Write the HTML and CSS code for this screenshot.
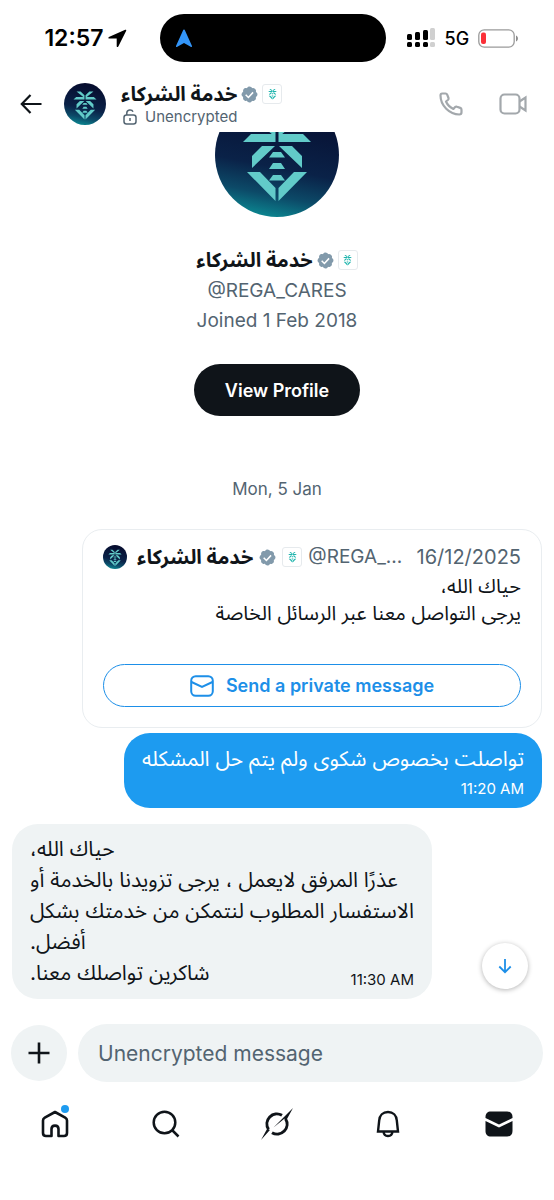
FILE: index.html
```html
<!DOCTYPE html>
<html lang="en">

<head>
    <meta charset="UTF-8">
    <meta name="viewport" content="width=device-width, initial-scale=1.0">
    <title>Messages</title>
    <link rel="stylesheet" href="styles.css">
</head>

<body>
    <!-- Shared symbols -->
    <svg class="symbols" aria-hidden="true">
        <defs>
            <linearGradient id="night" x1="0.6" y1="0" x2="0.4" y2="1">
                <stop offset="0" stop-color="#060b2c" />
                <stop offset="0.6" stop-color="#0a2248" />
                <stop offset="0.82" stop-color="#0c4a68" />
                <stop offset="1" stop-color="#0b8791" />
            </linearGradient>
        </defs>
        <symbol id="palm" viewBox="26 20 72 90">
            <path d="M37 25h12l11.500 11v8zM87 25H75L63.500 36v8zM36 41h24.500v8H28zM88 41H63.500v8H96zM47 53h13L37 75V63zM77 53H64l23 22V63z" />
            <path d="M58 59h8l4 5.500H54zM58 70h8l4 6H54zM58 82h8l4 5.500H54z" />
            <path d="M32 79h13l15.500 16v13zM92 79H79L63.500 95v13z" />
        </symbol>
        <symbol id="avatar" viewBox="0 0 124 124">
            <circle cx="62" cy="62" r="62" fill="url(#night)" />
            <use href="#palm" x="26" y="20" width="72" height="90" fill="#62cbc9" />
        </symbol>
        <symbol id="verified" viewBox="1 1 20 20">
            <path fill="#829aab" d="M20.4 11c0-.6-.2-1.3-.5-1.8s-.8-1-1.4-1.200c.2-.6.3-1.300.1-1.900-.1-.7-.4-1.200-.9-1.700s-1-.8-1.700-.9c-.6-.1-1.300-.1-1.900.1-.2-.6-.7-1.100-1.200-1.400S11.600 1.600 11 1.600s-1.300.2-1.800.5-1 .8-1.200 1.400c-.6-.2-1.300-.2-1.900-.1-.7.1-1.200.4-1.700.9s-.8 1-.9 1.700c-.1.6-.1 1.300.1 1.900-.6.2-1.100.7-1.400 1.200S1.600 10.400 1.600 11s.2 1.300.6 1.800c.3.5.8 1 1.400 1.200-.2.6-.3 1.300-.1 1.900.1.700.4 1.200.9 1.700s1 .8 1.700.9c.6.1 1.300.1 1.900-.1.2.6.7 1.100 1.200 1.400s1.200.6 1.800.6 1.300-.2 1.800-.6c.5-.3 1-.8 1.200-1.400.6.2 1.300.3 1.900.1.700-.1 1.200-.4 1.700-.9s.8-1 .9-1.700c.1-.6.1-1.300-.1-1.900.6-.2 1.100-.7 1.400-1.200.4-.5.500-1.200.500-1.800z" />
            <path fill="none" stroke="#fff" stroke-width="1.800" d="M6.500 11.300l3.200 3.200 5.500-6" />
        </symbol>
    </svg>

    <div class="screen">
        <div class="status-bar">
            <div class="status-time">
                <span>12:57</span>
                <svg width="19" height="19" viewBox="0 0 19 19">
                    <path d="M17.200.8.900 7.900c-.8.400-.6 1.600.3 1.600h7.500v7.700c0 1 1.200 1.200 1.600.3L18.200 1.800c.3-.7-.3-1.300-1-1z" />
                </svg>
            </div>
            <div class="island">
                <svg width="18" height="19" viewBox="0 0 18 19">
                    <path fill="#3395f8" d="M9 .6c.5 0 .8.300 1 .8l6.900 15.300c.4.900-.4 1.600-1.200 1.100L9 14l-6.700 3.800c-.8.500-1.600-.2-1.200-1.100L8 1.400c.2-.5.500-.8 1-.8z" />
                </svg>
            </div>
            <div class="status-icons">
                <svg width="29" height="20" viewBox="0 0 29 20">
                    <rect x="0" y="6" width="5" height="6" rx="1.500" />
                    <rect x="8" y="4" width="5" height="8" rx="1.500" />
                    <rect x="16" y="2" width="5" height="10" rx="1.500" />
                    <rect x="23" y="0" width="5" height="12" rx="1.500" fill="#d0d0d0" />
                    <rect x="0" y="14" width="5" height="5" rx="1.500" />
                    <rect x="8" y="14" width="5" height="5" rx="1.500" />
                    <rect x="16" y="14" width="5" height="5" rx="1.500" />
                    <rect x="23" y="14" width="5" height="5" rx="1.500" fill="#d0d0d0" />
                </svg>
                <span>5G</span>
                <svg width="41" height="19" viewBox="0 0 41 19">
                    <rect x=".8" y=".8" width="35.400" height="17.400" rx="5.500" fill="none" stroke="#9a9a9a" stroke-width="1.300" />
                    <rect x="3" y="3.500" width="5" height="11.500" rx="2" fill="#fb3038" />
                    <path fill="#8c8c8c" d="M38 6.500c2.600 1 2.600 5 0 6z" />
                </svg>
            </div>
        </div>

        <header class="chat-header">
            <button class="icon-button" aria-label="Back">
                <svg width="22" height="20" viewBox="0 0 22 20" fill="none" stroke="#0f1419" stroke-width="2.200">
                    <path d="M10.500 1 1.800 10l8.700 9M2 10h19.500" />
                </svg>
            </button>
            <svg class="header-avatar"><use href="#avatar" /></svg>
            <div class="header-title">
                <div class="name-row">
                    <span class="name" lang="ar" dir="rtl">خدمة الشركاء</span>
                    <svg class="verified"><use href="#verified" /></svg>
                    <span class="affiliate"><svg><use href="#palm" /></svg></span>
                </div>
                <div class="encryption">
                    <svg width="14" height="16" viewBox="0 0 14 16" fill="none" stroke="#536471" stroke-width="1.500">
                        <rect x="1" y="6" width="12" height="9" rx="2.500" />
                        <path d="M3.800 6V4c0-3.500 5-4.200 6.200-1.200M7 9v3" />
                    </svg>
                    <span>Unencrypted</span>
                </div>
            </div>
            <div class="header-actions">
                <button class="icon-button" aria-label="Call">
                    <svg width="24" height="24" viewBox="0 0 24 24" fill="none" stroke="#a3a8ac" stroke-width="2.200" stroke-linejoin="round">
                        <path d="M3.200 1.500h3.300c.9 0 1.500.5 1.800 1.300l1.200 3.200c.3.800 0 1.500-.6 2L7 9.500c1.300 3 4.200 6 7.400 7.400l1.700-1.800c.5-.5 1.200-.7 1.900-.4l3.200 1.200c.8.300 1.300.9 1.300 1.800v2.600c0 1.400-.9 2.200-2.200 2.200C10.500 22.500 1.500 13.500 1.500 3.500c0-1.200.7-2 1.700-2z" />
                    </svg>
                </button>
                <button class="icon-button" aria-label="Video call">
                    <svg width="28" height="22" viewBox="0 0 28 22" fill="none" stroke="#a3a8ac" stroke-width="2.200">
                        <rect x="1.500" y="1.500" width="19" height="19" rx="4" />
                        <path d="M20.500 8.500 26.500 4.500v13l-6-4" />
                    </svg>
                </button>
            </div>
        </header>

        <main class="conversation">
            <section class="profile">
                <svg class="profile-avatar"><use href="#avatar" /></svg>
                <div class="name-row">
                    <span class="name" lang="ar" dir="rtl">خدمة الشركاء</span>
                    <svg class="verified"><use href="#verified" /></svg>
                    <span class="affiliate"><svg><use href="#palm" /></svg></span>
                </div>
                <p>@REGA_CARES</p>
                <p>Joined 1 Feb 2018</p>
                <button class="view-profile">View Profile</button>
            </section>

            <p class="date">Mon, 5 Jan</p>

            <article class="quote-card">
                <div class="quote-head">
                    <svg class="quote-avatar"><use href="#avatar" /></svg>
                    <span class="name" lang="ar" dir="rtl">خدمة الشركاء</span>
                    <svg class="verified"><use href="#verified" /></svg>
                    <span class="affiliate"><svg><use href="#palm" /></svg></span>
                    <span class="handle">@REGA_...</span>
                    <time>16/12/2025</time>
                </div>
                <p class="quote-text" lang="ar" dir="rtl">حياك الله،<br>يرجى التواصل معنا عبر الرسائل الخاصة</p>
                <button class="private-message">
                    <svg width="24" height="22" viewBox="0 0 24 22" fill="none" stroke="#1d8fe8" stroke-width="2">
                        <rect x="1.200" y="1.200" width="21.600" height="19.600" rx="4.500" />
                        <path d="M1.500 7 12 12l10.500-5" />
                    </svg>
                    <span>Send a private message</span>
                </button>
            </article>

            <div class="bubble sent">
                <p lang="ar" dir="rtl">تواصلت بخصوص شكوى ولم يتم حل المشكله</p>
                <time>11:20 AM</time>
            </div>

            <div class="bubble received">
                <p lang="ar" dir="rtl">حياك الله،<br>عذرًا المرفق لايعمل ، يرجى تزويدنا بالخدمة أو<br>الاستفسار المطلوب لنتمكن من خدمتك بشكل<br>أفضل.<br>شاكرين تواصلك معنا.</p>
                <time>11:30 AM</time>
            </div>

            <button class="scroll-down" aria-label="Scroll to latest">
                <svg width="14" height="16" viewBox="0 0 14 16" fill="none" stroke="#1d8fe8" stroke-width="1.800">
                    <path d="M7 1v13M1.300 8.500 7 14.200l5.700-5.700" />
                </svg>
            </button>
        </main>

        <form class="composer">
            <button type="button" class="attach" aria-label="Add attachment">
                <svg width="22" height="22" viewBox="0 0 22 22" stroke="#0f1419" stroke-width="2.600">
                    <path d="M11 .5v21M.5 11h21" />
                </svg>
            </button>
            <input type="text" placeholder="Unencrypted message" aria-label="Message">
        </form>

        <nav class="tab-bar">
            <a href="#" class="home" aria-label="Home">
                <svg width="28" height="28" viewBox="0 0 28 28" fill="none" stroke="#0f1419" stroke-width="2.600" stroke-linejoin="round">
                    <path d="M14 2 3.800 7.600C2.600 8.300 2 9.300 2 10.600V23c0 2 1 3 3 3h5.500v-7c0-4.500 7-4.500 7 0v7H23c2 0 3-1 3-3V10.600c0-1.300-.6-2.300-1.800-3z" />
                </svg>
                <span class="dot"></span>
            </a>
            <a href="#" aria-label="Search">
                <svg width="28" height="28" viewBox="0 0 28 28" fill="none" stroke="#0f1419" stroke-width="2.500">
                    <circle cx="12.500" cy="12.500" r="10.800" />
                    <path d="M20 20l6.500 6.500" />
                </svg>
            </a>
            <a href="#" aria-label="Grok">
                <svg width="34" height="34" viewBox="0 0 34 34" fill="#0f1419">
                    <path fill="none" stroke="#0f1419" stroke-width="3" d="M22 8.300A10 10 0 0 0 8.500 22.300M12 25.700A10 10 0 0 0 25.500 11.700" />
                    <path d="M13.500 20.500 33 1 26.700 12.600l-2.400-.8zM1 33 7.300 21.400l2.600 1.600z" />
                </svg>
            </a>
            <a href="#" aria-label="Notifications">
                <svg width="26" height="28" viewBox="0 0 26 28" fill="none" stroke="#0f1419" stroke-width="2.400">
                    <path d="M13 2c-5 0-8.500 3.500-8.800 8.500L3 21.500h20l-1.200-11C21.500 5.500 18 2 13 2zM8.500 21.500c.5 6 8.500 6 9 0" />
                </svg>
            </a>
            <a href="#" aria-label="Messages">
                <svg width="28" height="26" viewBox="0 0 28 26" fill="#0f1419">
                    <path d="M.5 7V6c0-3.500 2-5.500 5.500-5.500h16c3.500 0 5.500 2 5.500 5.500v1L14 13.500z" />
                    <path d="M.5 10v10c0 3.500 2 5.500 5.500 5.500h16c3.500 0 5.500-2 5.500-5.500V10L14 16.500z" />
                </svg>
            </a>
        </nav>
    </div>
</body>

</html>
```
FILE: styles.css
```css
* {
    box-sizing: border-box;
}

body {
    margin: 0;
    background-color: #fff;
    color: #0f1419;
    font-family: Inter, "Noto Sans Arabic", "Noto Sans", "DejaVu Sans", sans-serif;
    font-size: 20px;
}

p {
    margin: 0;
}

svg {
    display: block;
    flex-shrink: 0;
}

button {
    border: 0;
    padding: 0;
    background: none;
    font-family: inherit;
    cursor: pointer;
}

.symbols {
    position: absolute;
    width: 0;
    height: 0;
}

.screen {
    display: flex;
    flex-direction: column;
    min-height: 100vh;
}

/* Status bar */
.status-bar {
    display: grid;
    grid-template-columns: 1fr 226px 1fr;
    align-items: center;
    padding: 14px 9px 0 0;
    color: #000;
}

.status-time {
    display: flex;
    align-items: center;
    justify-content: flex-end;
    gap: 4px;
    padding-right: 33px;
    font-size: 23px;
    font-weight: 600;
}

.island {
    display: flex;
    align-items: center;
    height: 48px;
    padding-left: 15px;
    border-radius: 24px;
    background-color: #000;
}

.status-icons {
    display: flex;
    align-items: center;
    gap: 9px;
    padding-left: 21px;
    font-size: 18px;
    font-weight: 500;
}

/* Chat header */
.chat-header {
    display: flex;
    align-items: center;
    height: 70px;
    padding: 14px 27px 0 20px;
}

.header-avatar {
    width: 42px;
    height: 42px;
    margin: 0 15px 0 22px;
}

.header-title {
    flex: 1;
}

.name-row {
    display: flex;
    align-items: center;
    gap: 4px;
}

.name {
    font-size: 20px;
    font-weight: 700;
    line-height: 26px;
    white-space: nowrap;
}

.verified {
    width: 17px;
    height: 17px;
}

.affiliate {
    display: flex;
    align-items: center;
    justify-content: center;
    width: 20px;
    height: 20px;
    border: 1px solid #e6eaed;
    border-radius: 3px;
}

.affiliate svg {
    width: 9px;
    height: 12px;
    fill: #1fb5ad;
}

.encryption {
    display: flex;
    align-items: center;
    gap: 8px;
    padding-left: 2px;
    color: #536471;
    font-size: 15px;
    line-height: 20px;
}

.header-actions {
    display: flex;
    align-items: center;
    gap: 36px;
}

/* Conversation */
.conversation {
    position: relative;
    display: flex;
    flex-direction: column;
    padding: 0 12px;
    overflow: hidden;
}

.profile {
    display: flex;
    flex-direction: column;
    align-items: center;
    color: #536471;
    font-size: 19px;
    line-height: 30px;
}

.profile .name-row {
    margin-bottom: 3px;
    color: #0f1419;
}

.profile-avatar {
    width: 124px;
    height: 124px;
    margin: -39px 0 30px;
}

.view-profile {
    height: 52px;
    margin-top: 28px;
    padding: 0 31px;
    border-radius: 26px;
    background-color: #0f1419;
    color: #fff;
    font-size: 18px;
    font-weight: 600;
}

.date {
    margin: 61px 0 28px;
    color: #536471;
    font-size: 17px;
    line-height: 24px;
    text-align: center;
}

.quote-card {
    align-self: flex-end;
    width: 460px;
    max-width: 100%;
    padding: 13px 20px 20px;
    border: 1px solid #e9edf0;
    border-radius: 20px;
}

.quote-head {
    display: flex;
    align-items: center;
    gap: 6px;
    color: #536471;
    font-size: 20px;
    line-height: 28px;
}

.quote-head .name {
    margin-left: 4px;
    color: #0f1419;
}

.quote-head .handle {
    font-size: 19px;
}

.quote-head time {
    margin-left: auto;
}

.quote-avatar {
    width: 24px;
    height: 24px;
}

.quote-text {
    margin-top: 2px;
    line-height: 27px;
}

.private-message {
    display: flex;
    align-items: center;
    justify-content: center;
    gap: 12px;
    width: 100%;
    height: 43px;
    margin-top: 37px;
    border: 1px solid #1d8fe8;
    border-radius: 22px;
    color: #1d8fe8;
    font-size: 18px;
    font-weight: 600;
}

.bubble {
    border-radius: 26px;
    font-size: 21px;
}

.bubble time {
    font-size: 15px;
    line-height: 20px;
}

.sent {
    display: flex;
    flex-direction: column;
    align-items: flex-end;
    align-self: flex-end;
    gap: 2px;
    margin-top: 5px;
    padding: 8px 18px 9px;
    background-color: #1d9bf0;
    color: #fff;
}

.sent p {
    line-height: 36px;
}

.received {
    align-self: flex-start;
    position: relative;
    margin-top: 16px;
    padding: 9px 18px 11px;
    background-color: #eff3f4;
}

.received p {
    line-height: 31px;
    text-align: left;
}

.received time {
    position: absolute;
    right: 18px;
    bottom: 9px;
}

.scroll-down {
    display: flex;
    align-items: center;
    justify-content: center;
    position: absolute;
    right: 26px;
    bottom: 10px;
    width: 46px;
    height: 46px;
    border-radius: 50%;
    background-color: #fff;
    box-shadow: 0 1px 5px rgba(0, 0, 0, 0.3);
}

/* Composer */
.composer {
    display: flex;
    align-items: center;
    gap: 11px;
    margin-top: 25px;
    padding: 0 11px;
}

.attach {
    display: flex;
    align-items: center;
    justify-content: center;
    flex-shrink: 0;
    width: 56px;
    height: 56px;
    border-radius: 50%;
    background-color: #eff3f4;
}

.composer input {
    flex: 1;
    min-width: 0;
    height: 58px;
    padding: 0 20px;
    border: 0;
    border-radius: 29px;
    background-color: #eff3f4;
    font-family: inherit;
    font-size: 21px;
}

.composer input::placeholder {
    color: #536471;
    opacity: 1;
}

/* Tab bar */
.tab-bar {
    display: grid;
    grid-template-columns: repeat(5, 1fr);
    align-items: center;
    justify-items: center;
    padding: 25px 0 59px;
}

.home {
    position: relative;
}

.dot {
    position: absolute;
    top: -5px;
    right: 0;
    width: 8px;
    height: 8px;
    border-radius: 50%;
    background-color: #1d9bf0;
}
```
